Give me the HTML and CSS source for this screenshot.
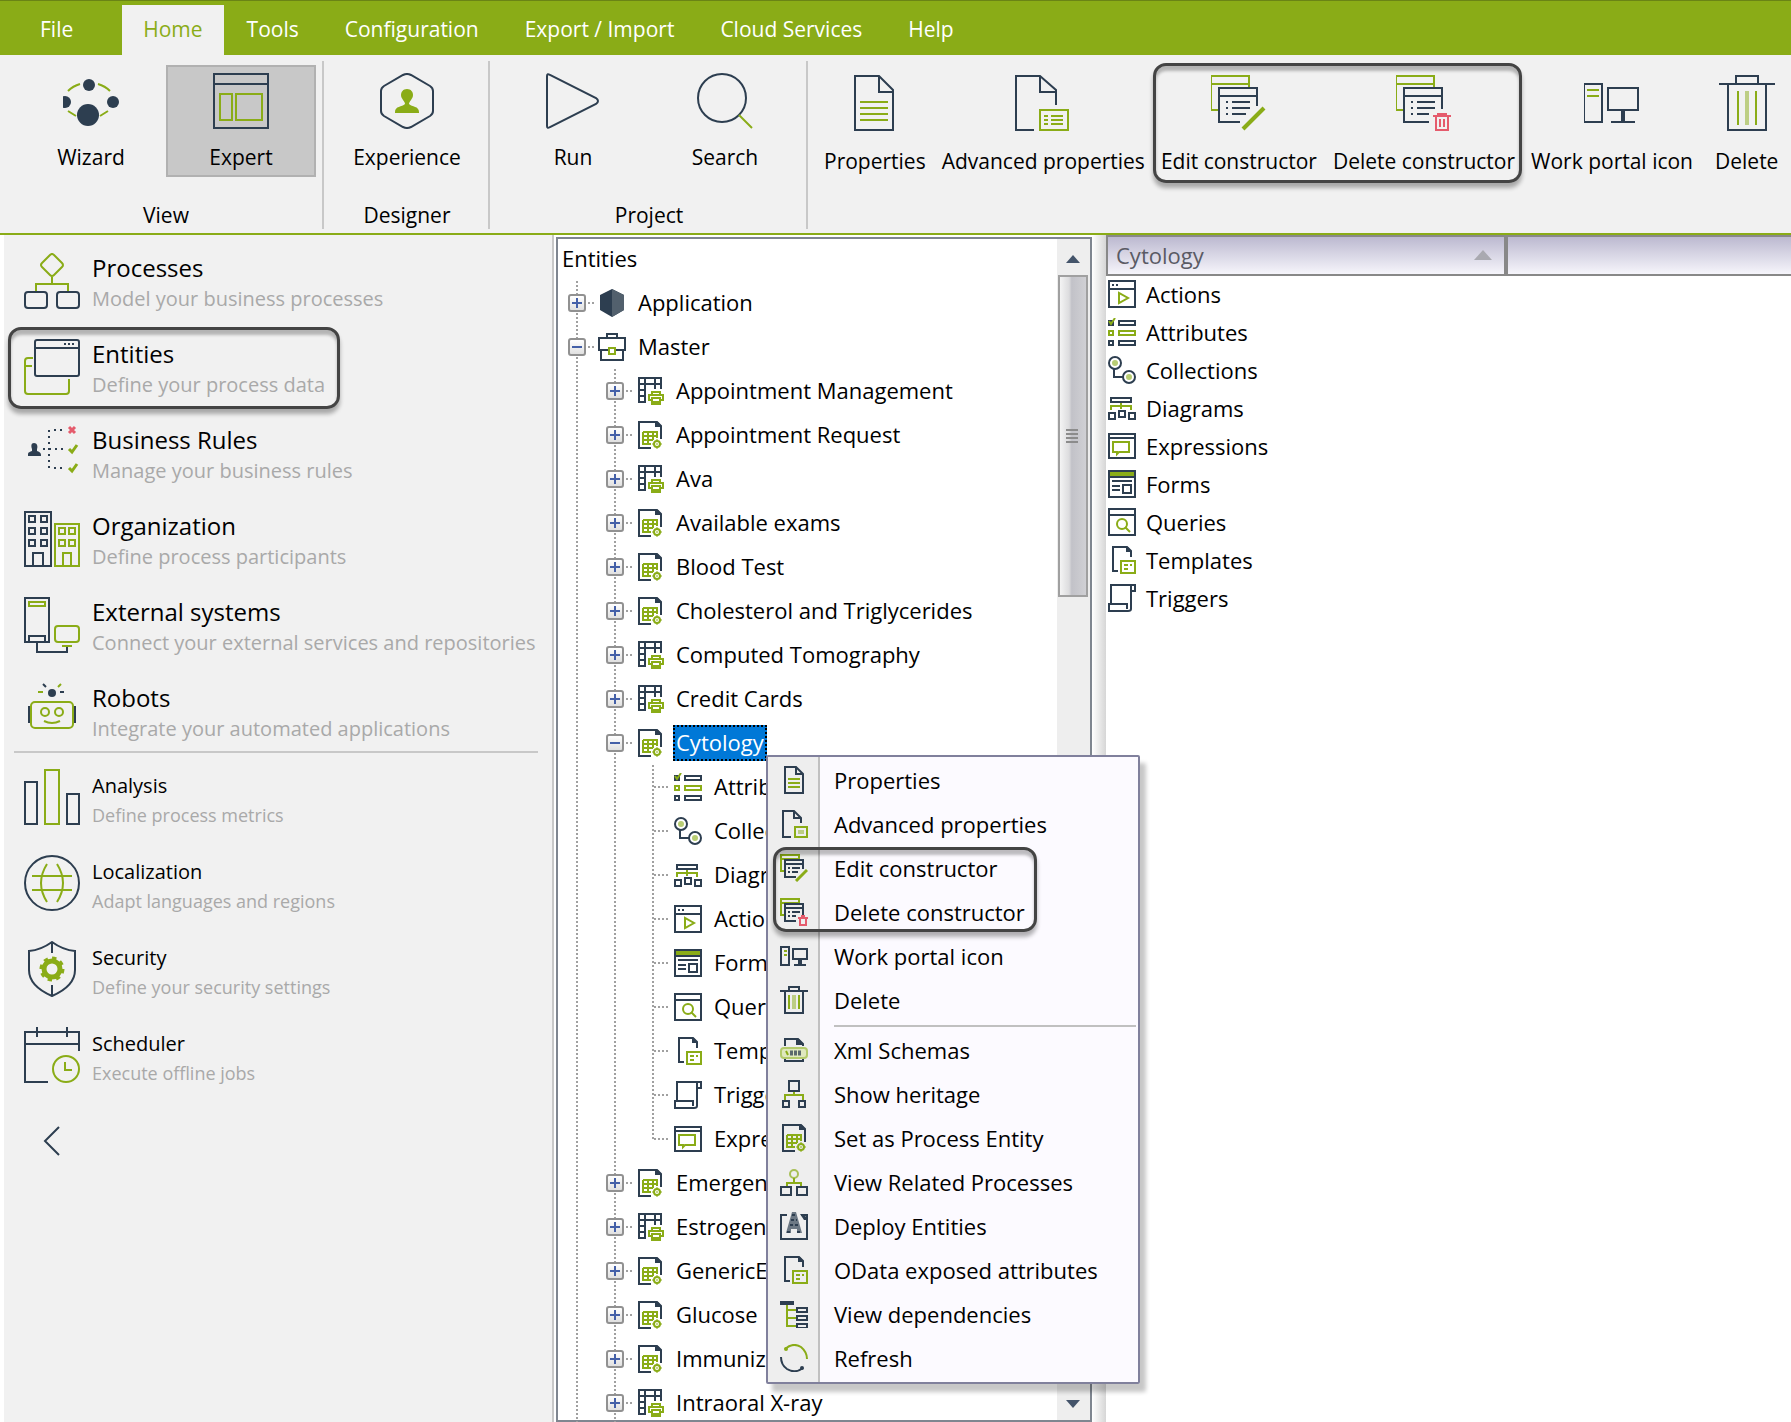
FILE: index.html
```html
<!DOCTYPE html>
<html lang="en">
<head>
    <meta charset="UTF-8">
    <meta name="viewport" content="width=device-width, initial-scale=1.0">
    <title>Studio - Entities</title>
    <link rel="stylesheet" href="styles.css">
</head>
<body>

    <!-- Icon library -->
    <svg class="icon-library" aria-hidden="true">
        <!-- Large icons, 56 x 56 -->
        <symbol id="wizard" viewBox="3 0 56 56">
            <path class="g" d="M8 18Q13 13 20 11M38 11Q45 13 50 18M8 38l8 5M48 38l-8 5"/>
            <g class="nf"><circle cx="29" cy="12" r="6"/><circle cx="5" cy="29" r="6"/><circle cx="53" cy="29" r="6"/><circle cx="28" cy="42" r="11"/></g>
        </symbol>
        <symbol id="expert" viewBox="0 0 56 56">
            <path class="n" d="M1 1H55V55H1ZM1 11H55"/>
            <path class="g" d="M7 21H19V47H7ZM23 21H49V47H23Z"/>
        </symbol>
        <symbol id="experience" viewBox="0 0 56 56">
            <path class="n" d="M24 2Q28 0 32 2L51 13Q54 15 54 18V38Q54 41 51 43L32 54Q28 56 24 54L5 43Q2 41 2 38V18Q2 15 5 13Z"/>
            <path class="gf" d="M28 16c-4 0-6 3-6 6 0 4 4 6 4 9-3 3-10 2-10 8v1h24v-1c0-6-7-5-10-8 0-3 4-5 4-9 0-3-2-6-6-6z"/>
        </symbol>
        <symbol id="run" viewBox="0 0 56 56">
            <path class="n" d="M2 3Q2 0 5 2L51 25Q55 28 51 31L5 54Q2 56 2 53Z"/>
        </symbol>
        <symbol id="search" viewBox="0 0 56 56">
            <circle class="n" cx="25" cy="25" r="24"/>
            <path class="g" d="M42 42L55 55"/>
        </symbol>
        <symbol id="properties" viewBox="1 0 56 56">
            <path class="n" d="M9 1H33L47 15V55H9ZM33 1V17H47"/>
            <path class="g" d="M14 27H42M14 33H42M14 39H42M14 45H42"/>
        </symbol>
        <symbol id="advanced" viewBox="2 0 56 56">
            <path class="n" d="M21 55H3V1H27L43 15V30M27 1V17H43"/>
            <path class="g" d="M27 35H55V55H27ZM31 41H35M38 41H50M31 45H35M38 45H50M31 49H35M38 49H50"/>
        </symbol>
        <symbol id="edit-ctor" viewBox="1 0 56 56">
            <path class="g" d="M8 35H1V1H39V12M1 9H39"/>
            <path class="n" d="M47 31V13H9V47H30M9 21H47M16 27H18M22 27H40M16 33H18M22 33H40M16 39H18M22 39H36"/>
            <path class="g" stroke-width="4" d="M33 54L54 33"/>
        </symbol>
        <symbol id="delete-ctor" viewBox="1 0 56 56">
            <path class="g" d="M8 35H1V1H39V12M1 9H39"/>
            <path class="n" d="M47 34V13H9V47H34M9 21H47M16 27H18M22 27H40M16 33H18M22 33H40M16 39H18M22 39H34"/>
            <path class="r" d="M38 41H56M42 39H52M41 41V55H53V41M45 44V52M49 44V52"/>
        </symbol>
        <symbol id="portal" viewBox="1 0 56 56">
            <path class="n" d="M1 9H19V47H1ZM25 13H55V35H25ZM28 47H52"/>
            <path class="n" stroke-width="4" d="M40 35V47"/>
            <path class="g" d="M4 15H16M4 21H16"/>
        </symbol>
        <symbol id="bin" viewBox="0 0 56 56">
            <path class="n" d="M0 9H56M17 9V1H39V9M9 9V55H47V9"/>
            <path class="g" d="M19 16V50M37 16V50"/>
            <path class="g" stroke-width="4" opacity=".5" d="M28 16V50"/>
        </symbol>
        <symbol id="processes" viewBox="0 0 56 56">
            <path class="g" d="M26 2Q28 0 30 2L38 10Q40 12 38 14L30 22Q28 24 26 22L18 14Q16 12 18 10ZM28 24V31M12 38V31H44V38"/>
            <rect class="n" x="1" y="39" width="22" height="16" rx="3"/>
            <rect class="n" x="33" y="39" width="22" height="16" rx="3"/>
        </symbol>
        <symbol id="entities" viewBox="0 0 56 56">
            <path class="g" d="M9 19H4Q1 19 1 22V52Q1 55 4 55H42Q45 55 45 52V40M1 27H8"/>
            <rect class="n" x="11" y="1" width="44" height="36" rx="2"/>
            <path class="n" d="M11 9H55M40 5H42M44 5H46M48 5H50"/>
        </symbol>
        <symbol id="rules" viewBox="0 0 56 56">
            <path class="nf" d="M10 18c3 0 4 3 3 6v2c3 1 4 2 4 4v1H4v-2c0-2 2-2 4-3v-2c-1-3-1-6 2-6z"/>
            <path class="n" stroke-dasharray="2 4" d="M19 24H40M25 5V44M30 5H40M30 43H40"/>
            <path class="r" stroke-width="3" d="M45 2L51 8M51 2L45 8"/>
            <path class="g" stroke-width="3" d="M45 24L48 27L53 20M45 43L48 46L53 39"/>
        </symbol>
        <symbol id="organization" viewBox="0 0 56 56">
            <path class="n" d="M1 1H27V55H1ZM5 5h6v6h-6zM17 5h6v6h-6zM5 17h6v6h-6zM17 17h6v6h-6zM5 29h6v6h-6zM17 29h6v6h-6zM9 55V42H19V55"/>
            <path class="g" d="M31 13H55V55H31ZM35 17h6v6h-6zM45 17h6v6h-6zM35 29h6v6h-6zM45 29h6v6h-6zM39 55V42H47V55"/>
        </symbol>
        <symbol id="external" viewBox="0 0 56 56">
            <path class="n" d="M1 1H25V45H1ZM5 45V39H21V45M13 45V55H43V50"/>
            <path class="g" d="M5 5H21V9H5ZM38 49H48"/>
            <rect class="g" x="31" y="29" width="24" height="16" rx="3"/>
        </symbol>
        <symbol id="robots" viewBox="0 0 56 56">
            <circle class="nf" cx="28" cy="10" r="4"/>
            <path class="n" d="M19 1L22 4M36 9H40M5 23V40M51 23V40"/>
            <path class="g" d="M37 1L34 4M14 9H19M20 38Q28 42 36 38"/>
            <rect class="g" x="7" y="19" width="42" height="26" rx="4"/>
            <circle class="g" cx="21" cy="29" r="4"/><circle class="g" cx="35" cy="29" r="4"/>
        </symbol>
        <symbol id="analysis" viewBox="0 0 56 56">
            <path class="n" d="M1 13H13V55H1ZM43 25H55V55H43Z"/>
            <path class="g" d="M21 1H35V55H21Z"/>
        </symbol>
        <symbol id="localization" viewBox="0 0 56 56">
            <circle class="n" cx="28" cy="28" r="27"/>
            <path class="g" d="M8 21H48M8 35H48M23 9Q11 28 23 47M33 9Q45 28 33 47"/>
        </symbol>
        <symbol id="security" viewBox="0 0 56 56">
            <path class="n" d="M28 1Q17 9 5 10V29Q5 45 28 55Q51 45 51 29V10Q39 9 28 1ZM28 1V12M28 44V55"/>
            <circle class="g" cx="28" cy="28" r="8" stroke-width="5"/>
            <circle class="g" cx="28" cy="28" r="11" stroke-width="3" stroke-dasharray="4.3 4.3"/>
        </symbol>
        <symbol id="scheduler" viewBox="0 0 56 56">
            <path class="n" d="M24 55H1V5H55V24M1 17H55M13 0V10M43 0V10"/>
            <circle class="g" cx="42" cy="42" r="13"/>
            <path class="g" d="M41 35V43H48"/>
        </symbol>

        <!-- Small icons, 28 x 28 -->
        <symbol id="s-application" viewBox="0 0 28 28">
            <path class="nf" d="M14 0L26 6V21L14 28L2 21V6Z"/>
            <path fill="#52606d" d="M14 0L26 6V21L14 28Z"/>
        </symbol>
        <symbol id="s-master" viewBox="0 0 28 28">
            <path class="n" d="M9 5V1H19V5M10 17H1V5H27V17H18M3 17V27H25V17"/>
            <path class="g" d="M11 15H17V21H11Z"/>
        </symbol>
        <symbol id="s-table" viewBox="-2 0 28 28">
            <path class="n" d="M23 12V1H1V25H7V1M1 7H23M1 13H7M1 19H7M17 1V12M12 1V2"/>
            <path class="g" d="M14 23H11V18H25V23H22M14 17V15H22V17M14 21H22V26H14Z"/>
            <path class="gf" d="M13 24H23V28H13Z"/>
        </symbol>
        <symbol id="s-docgrid" viewBox="-2 0 28 28">
            <path class="n" d="M13 27H1V1H19L23 5V18"/>
            <path class="nf" d="M17 1H20L24 6H17Z"/>
            <path class="g" d="M5 11H19V17M5 11V23H13M5 15H19M5 19H15M10 11V23M15 11V19"/>
            <circle class="g" cx="19" cy="23" r="3"/>
            <path class="g" opacity=".5" stroke-dasharray="2 2" d="M19 18V28M14 23H24"/>
        </symbol>
        <symbol id="s-attributes" viewBox="0 0 28 28">
            <path class="n" d="M11 3H27V7H11ZM11 23H27V27H11ZM1 23H5V27H1ZM1 3H5V7H1Z"/>
            <path class="g" d="M11 13H27V17H11ZM1 13H5V17H1ZM1 3L3 6L7 0"/>
        </symbol>
        <symbol id="s-collections" viewBox="0 0 28 28">
            <path class="n" d="M6 13V21H15"/>
            <circle class="n" cx="7" cy="7" r="6"/><circle class="n" cx="21" cy="21" r="6"/>
            <g class="gf" opacity=".6"><circle cx="7" cy="7" r="3"/><circle cx="21" cy="21" r="3"/></g>
        </symbol>
        <symbol id="s-diagrams" viewBox="0 0 28 28">
            <path class="g" d="M3 16V12H23V16M13 8V15"/>
            <path class="n" d="M3 4H23V8H3ZM1 19H7V25H1ZM11 17H17V23H11ZM21 19H27V25H21Z"/>
        </symbol>
        <symbol id="s-actions" viewBox="0 0 28 28">
            <path class="n" d="M1 1H27V27H1ZM1 9H27M4 5H6M8 5H10"/>
            <path class="g" d="M11 13V23L20 18Z"/>
        </symbol>
        <symbol id="s-forms" viewBox="0 0 28 28">
            <path class="gf" d="M1 1H27V7H1Z"/>
            <path class="n" d="M1 1H27V27H1ZM1 7H27M4 11H24M4 16H12M4 20H12M15 15H23V23H15Z"/>
        </symbol>
        <symbol id="s-queries" viewBox="0 0 28 28">
            <path class="n" d="M1 1H27V27H1ZM1 7H27"/>
            <circle class="g" cx="14" cy="16" r="5"/>
            <path class="g" d="M17 19L22 24"/>
        </symbol>
        <symbol id="s-templates" viewBox="0 0 28 28">
            <path class="n" d="M10 25H5V1H19L23 5V11"/>
            <path class="nf" d="M18 1H20L24 6H18Z"/>
            <path class="g" d="M13 15H27V27H13ZM16 19H20M22 19H24M16 23H20"/>
        </symbol>
        <symbol id="s-triggers" viewBox="0 0 28 28">
            <path class="n" d="M3 19V1H27V7H23V25Q23 27 20 27H1V20H19V25M23 7V1"/>
        </symbol>
        <symbol id="s-expressions" viewBox="0 0 28 28">
            <path class="n" d="M1 2H27V26H1ZM1 6H27"/>
            <path class="g" d="M5 10H21V20H11L9 22V20H5Z"/>
        </symbol>
        <symbol id="s-properties" viewBox="0 0 28 28">
            <path class="n" d="M5 1H16L23 8V27H5ZM16 1V8H23"/>
            <path class="g" d="M8 13H20M8 17H20M8 21H20"/>
        </symbol>
        <symbol id="s-advanced" viewBox="0 0 28 28">
            <path class="n" d="M11 27H3V1H14L21 8V13M14 1V8H21"/>
            <path class="g" d="M15 17H27V27H15Z"/>
            <path class="gf" opacity=".5" d="M18 20H24V24H18Z"/>
        </symbol>
        <symbol id="s-edit-ctor" viewBox="0 0 28 28">
            <path class="g" d="M4 17H1V1H19V5M1 5H19"/>
            <path class="n" d="M23 15V6H5V23H16M5 10H23M8 14H10M12 14H20M8 18H10M12 18H18"/>
            <path class="g" stroke-width="3" d="M16 27L27 16"/>
        </symbol>
        <symbol id="s-delete-ctor" viewBox="0 0 28 28">
            <path class="g" d="M4 17H1V1H19V5M1 5H19"/>
            <path class="n" d="M23 17V6H5V23H16M5 10H23M8 14H10M12 14H20M8 18H10M12 18H16"/>
            <path class="r" d="M18 20H28M21 18H25M20 20V27H26V20"/>
        </symbol>
        <symbol id="s-portal" viewBox="0 0 28 28">
            <path class="n" d="M1 5H9V23H1ZM13 7H27V17H13ZM14 23H26"/>
            <path class="n" stroke-width="4" d="M20 17V23"/>
            <path class="g" d="M4 9H7M4 13H7"/>
        </symbol>
        <symbol id="s-bin" viewBox="0 0 28 28">
            <path class="n" d="M0 5H28M9 5V1H19V5M5 5V27H23V5"/>
            <path class="g" d="M9 9V23M19 9V23"/>
            <path class="g" stroke-width="4" opacity=".5" d="M14 9V23"/>
        </symbol>
        <symbol id="s-xml" viewBox="0 0 28 28">
            <path class="n" d="M5 10V3H18L23 8V10M5 23V25H23V23"/>
            <path class="nf" d="M16 3H19L24 9H16Z"/>
            <rect x="1" y="12" width="26" height="10" rx="3" fill="#dfe8be" stroke="#b3ca6b" stroke-width="2"/>
            <path class="n" opacity=".75" stroke-width="5" stroke-dasharray="3 1" d="M10 17H21"/>
            <path class="g" d="M6 15L8 19"/>
        </symbol>
        <symbol id="s-heritage" viewBox="0 0 28 28">
            <path class="g" d="M14 11V15M5 20V15H23V20"/>
            <path class="n" d="M9 1H19V11H9ZM3 21H9V27H3ZM19 21H25V27H19Z"/>
        </symbol>
        <symbol id="s-related" viewBox="0 0 28 28">
            <circle class="g" cx="14" cy="6" r="4" opacity=".7"/>
            <path class="g" d="M14 10V15M7 18V15H21V18"/>
            <path class="n" d="M1 19H11V27H1ZM17 19H27V27H17Z"/>
        </symbol>
        <symbol id="s-deploy" viewBox="0 0 28 28">
            <path class="n" d="M7 3H1V27H27V3H21"/>
            <path class="nf" d="M20 2H24L28 8H24Z"/>
            <path fill="#6c7884" d="M12 0H16L22 21H17V17H11V21H6Z"/>
            <path class="n" stroke-dasharray="3 2" d="M12 3H16M11 8H17M10 13H19M7 20H11M17 20H21"/>
        </symbol>
        <symbol id="s-dependencies" viewBox="0 0 28 28">
            <path class="nf" d="M0 1H14V5H0Z"/>
            <path class="g" d="M7 5V26H16M7 10H16M7 18H16"/>
            <path class="n" d="M17 8H27V12H17ZM17 16H27V20H17ZM17 24H27V28H17Z"/>
        </symbol>
        <symbol id="s-refresh" viewBox="0 0 28 28">
            <path class="g" d="M5 5Q13 -2 21 3Q27 8 27 15"/>
            <path class="n" d="M1 13Q1 21 7 25Q15 30 23 24"/>
            <circle class="gf" cx="6" cy="5" r="2"/><circle class="nf" cx="22" cy="24" r="2"/>
        </symbol>
    </svg>

    <!-- Menu bar -->
    <nav class="menubar">
        <button class="tab tab-file">File</button>
        <button class="tab active">Home</button>
        <button class="tab">Tools</button>
        <button class="tab">Configuration</button>
        <button class="tab">Export / Import</button>
        <button class="tab">Cloud Services</button>
        <button class="tab">Help</button>
    </nav>

    <!-- Ribbon -->
    <div class="ribbon">
        <section class="group group-view">
            <div class="tools">
                <button class="tool"><svg><use href="#wizard"/></svg>Wizard</button>
                <button class="tool pressed"><svg><use href="#expert"/></svg>Expert</button>
            </div>
            <h2>View</h2>
        </section>
        <section class="group">
            <div class="tools">
                <button class="tool"><svg><use href="#experience"/></svg>Experience</button>
            </div>
            <h2>Designer</h2>
        </section>
        <section class="group">
            <div class="tools">
                <button class="tool"><svg><use href="#run"/></svg>Run</button>
                <button class="tool"><svg><use href="#search"/></svg>Search</button>
            </div>
            <h2>Project</h2>
        </section>
        <section class="group group-edit">
            <button class="tool"><svg><use href="#properties"/></svg>Properties</button>
            <button class="tool"><svg><use href="#advanced"/></svg>Advanced properties</button>
            <div class="marked marked-tools">
                <button class="tool"><svg><use href="#edit-ctor"/></svg>Edit constructor</button>
                <button class="tool"><svg><use href="#delete-ctor"/></svg>Delete constructor</button>
            </div>
            <button class="tool"><svg><use href="#portal"/></svg>Work portal icon</button>
            <button class="tool tool-delete"><svg><use href="#bin"/></svg>Delete</button>
        </section>
    </div>

    <main class="workspace">
        <!-- Modules -->
        <aside class="sidebar">
            <ul class="modules">
                <li><a href="#"><svg><use href="#processes"/></svg><span><b>Processes</b><small>Model your business processes</small></span></a></li>
                <li><a href="#" class="marked marked-module"><svg><use href="#entities"/></svg><span><b>Entities</b><small>Define your process data</small></span></a></li>
                <li><a href="#"><svg><use href="#rules"/></svg><span><b>Business Rules</b><small>Manage your business rules</small></span></a></li>
                <li><a href="#"><svg><use href="#organization"/></svg><span><b>Organization</b><small>Define process participants</small></span></a></li>
                <li><a href="#"><svg><use href="#external"/></svg><span><b>External systems</b><small>Connect your external services and repositories</small></span></a></li>
                <li><a href="#"><svg><use href="#robots"/></svg><span><b>Robots</b><small>Integrate your automated applications</small></span></a></li>
            </ul>
            <ul class="modules modules-small">
                <li><a href="#"><svg><use href="#analysis"/></svg><span><b>Analysis</b><small>Define process metrics</small></span></a></li>
                <li><a href="#"><svg><use href="#localization"/></svg><span><b>Localization</b><small>Adapt languages and regions</small></span></a></li>
                <li><a href="#"><svg><use href="#security"/></svg><span><b>Security</b><small>Define your security settings</small></span></a></li>
                <li><a href="#"><svg><use href="#scheduler"/></svg><span><b>Scheduler</b><small>Execute offline jobs</small></span></a></li>
            </ul>
            <button class="collapse" aria-label="Collapse">
                <svg viewBox="0 0 18 30"><path class="n" d="M16 1L2 15L16 29"/></svg>
            </button>
        </aside>

        <!-- Entities tree -->
        <section class="tree-panel">
            <div class="tree">
                <div class="tree-title">Entities</div>
                <ul>
                    <li><div class="row"><button class="expander" aria-label="Expand"></button><svg><use href="#s-application"/></svg><span>Application</span></div></li>
                    <li>
                        <div class="row"><button class="expander open" aria-label="Collapse"></button><svg><use href="#s-master"/></svg><span>Master</span></div>
                        <ul>
                            <li><div class="row"><button class="expander" aria-label="Expand"></button><svg><use href="#s-table"/></svg><span>Appointment Management</span></div></li>
                            <li><div class="row"><button class="expander" aria-label="Expand"></button><svg><use href="#s-docgrid"/></svg><span>Appointment Request</span></div></li>
                            <li><div class="row"><button class="expander" aria-label="Expand"></button><svg><use href="#s-table"/></svg><span>Ava</span></div></li>
                            <li><div class="row"><button class="expander" aria-label="Expand"></button><svg><use href="#s-docgrid"/></svg><span>Available exams</span></div></li>
                            <li><div class="row"><button class="expander" aria-label="Expand"></button><svg><use href="#s-docgrid"/></svg><span>Blood Test</span></div></li>
                            <li><div class="row"><button class="expander" aria-label="Expand"></button><svg><use href="#s-docgrid"/></svg><span>Cholesterol and Triglycerides</span></div></li>
                            <li><div class="row"><button class="expander" aria-label="Expand"></button><svg><use href="#s-table"/></svg><span>Computed Tomography</span></div></li>
                            <li><div class="row"><button class="expander" aria-label="Expand"></button><svg><use href="#s-table"/></svg><span>Credit Cards</span></div></li>
                            <li class="has-menu">
                                <div class="row"><button class="expander open" aria-label="Collapse"></button><svg><use href="#s-docgrid"/></svg><span class="selected">Cytology</span></div>
                                <ul class="leaves">
                                    <li><div class="row"><svg><use href="#s-attributes"/></svg><span>Attributes</span></div></li>
                                    <li><div class="row"><svg><use href="#s-collections"/></svg><span>Collections</span></div></li>
                                    <li><div class="row"><svg><use href="#s-diagrams"/></svg><span>Diagrams</span></div></li>
                                    <li><div class="row"><svg><use href="#s-actions"/></svg><span>Actions</span></div></li>
                                    <li><div class="row"><svg><use href="#s-forms"/></svg><span>Forms</span></div></li>
                                    <li><div class="row"><svg><use href="#s-queries"/></svg><span>Queries</span></div></li>
                                    <li><div class="row"><svg><use href="#s-templates"/></svg><span>Templates</span></div></li>
                                    <li><div class="row"><svg><use href="#s-triggers"/></svg><span>Triggers</span></div></li>
                                    <li><div class="row"><svg><use href="#s-expressions"/></svg><span>Expressions</span></div></li>
                                </ul>
                                <!-- Context menu -->
                                <div class="context-menu">
                                    <button><svg><use href="#s-properties"/></svg>Properties</button>
                                    <button><svg><use href="#s-advanced"/></svg>Advanced properties</button>
                                    <div class="marked marked-menu">
                                        <button><svg><use href="#s-edit-ctor"/></svg>Edit constructor</button>
                                        <button><svg><use href="#s-delete-ctor"/></svg>Delete constructor</button>
                                    </div>
                                    <button><svg><use href="#s-portal"/></svg>Work portal icon</button>
                                    <button><svg><use href="#s-bin"/></svg>Delete</button>
                                    <hr>
                                    <button><svg><use href="#s-xml"/></svg>Xml Schemas</button>
                                    <button><svg><use href="#s-heritage"/></svg>Show heritage</button>
                                    <button><svg><use href="#s-docgrid"/></svg>Set as Process Entity</button>
                                    <button><svg><use href="#s-related"/></svg>View Related Processes</button>
                                    <button><svg><use href="#s-deploy"/></svg>Deploy Entities</button>
                                    <button><svg><use href="#s-templates"/></svg>OData exposed attributes</button>
                                    <button><svg><use href="#s-dependencies"/></svg>View dependencies</button>
                                    <button><svg><use href="#s-refresh"/></svg>Refresh</button>
                                </div>
                            </li>
                            <li><div class="row"><button class="expander" aria-label="Expand"></button><svg><use href="#s-docgrid"/></svg><span>Emergen</span></div></li>
                            <li><div class="row"><button class="expander" aria-label="Expand"></button><svg><use href="#s-table"/></svg><span>Estrogen</span></div></li>
                            <li><div class="row"><button class="expander" aria-label="Expand"></button><svg><use href="#s-docgrid"/></svg><span>GenericEx</span></div></li>
                            <li><div class="row"><button class="expander" aria-label="Expand"></button><svg><use href="#s-docgrid"/></svg><span>Glucose</span></div></li>
                            <li><div class="row"><button class="expander" aria-label="Expand"></button><svg><use href="#s-docgrid"/></svg><span>Immuniza</span></div></li>
                            <li><div class="row"><button class="expander" aria-label="Expand"></button><svg><use href="#s-table"/></svg><span>Intraoral X-ray</span></div></li>
                        </ul>
                    </li>
                </ul>
            </div>
            <div class="scrollbar">
                <button class="arrow" aria-label="Scroll up"><svg viewBox="0 0 14 8"><path d="M0 8L7 0L14 8Z"/></svg></button>
                <div class="track"><div class="thumb"></div></div>
                <button class="arrow" aria-label="Scroll down"><svg viewBox="0 0 14 8"><path d="M0 0L7 8L14 0Z"/></svg></button>
            </div>
        </section>

        <div class="splitter"></div>

        <!-- Details of the selected entity -->
        <section class="details">
            <div class="details-header">
                <button class="column">Cytology<svg viewBox="0 0 18 10"><path d="M0 10L9 0L18 10Z"/></svg></button>
                <div class="column-rest"></div>
            </div>
            <ul class="details-list">
                <li><svg><use href="#s-actions"/></svg>Actions</li>
                <li><svg><use href="#s-attributes"/></svg>Attributes</li>
                <li><svg><use href="#s-collections"/></svg>Collections</li>
                <li><svg><use href="#s-diagrams"/></svg>Diagrams</li>
                <li><svg><use href="#s-expressions"/></svg>Expressions</li>
                <li><svg><use href="#s-forms"/></svg>Forms</li>
                <li><svg><use href="#s-queries"/></svg>Queries</li>
                <li><svg><use href="#s-templates"/></svg>Templates</li>
                <li><svg><use href="#s-triggers"/></svg>Triggers</li>
            </ul>
        </section>
    </main>

</body>
</html>
```

FILE: styles.css
```css
/* Reset and Body Styling */
*,
*::after {
    margin: 0;
    padding: 0;
    box-sizing: border-box;
}
body {
    font-family: 'Open Sans', 'Noto Sans', sans-serif;
    font-size: 22px;
    line-height: 30px;
    color: #000000;
    background-color: #ffffff;
    display: flex;
    flex-direction: column;
    height: 100vh;
    overflow: hidden;
}
button {
    font: inherit;
    color: inherit;
    background: none;
    border: none;
    cursor: pointer;
}
ul {
    list-style: none;
}
a {
    color: inherit;
    text-decoration: none;
}
svg {
    display: block;
    flex: none;
}
symbol {
    overflow: visible;
}

/* Icon colours */
.icon-library {
    position: absolute;
    width: 0;
    height: 0;
}
.n, .g, .r {
    fill: none;
}
.n {
    stroke: #2d3e50; /* Navy */
}
.g {
    stroke: #8aac17; /* Green */
}
.r {
    stroke: #e55b6c; /* Red */
}
.n:not([stroke-width]),
.g:not([stroke-width]),
.r:not([stroke-width]) {
    stroke-width: 2px;
}
.nf {
    fill: #2d3e50;
}
.gf {
    fill: #8aac17;
}

/* Dark frame around the highlighted items */
.marked {
    position: relative;
}
.marked::after {
    content: '';
    position: absolute;
    border: 3px solid #444444;
    border-radius: 13px;
    box-shadow: 0 5px 4px rgba(0, 0, 0, 0.3), inset 0 5px 3px rgba(0, 0, 0, 0.25);
    pointer-events: none;
}

/* Menu bar */
.menubar {
    display: flex;
    flex: none;
    height: 55px;
    padding: 4px 17px 0;
    background-color: #8aac17;
    border-top: 1px solid #6a8415;
    color: #ffffff;
}
.tab {
    padding: 0 23px 2px;
    font-size: 21px;
}
.tab-file {
    margin-right: 26px;
}
.tab.active {
    padding: 0 21px 2px;
    background-color: #f1f1f1;
    color: #8aac17;
}

/* Ribbon */
.ribbon {
    display: flex;
    flex: none;
    height: 180px;
    padding: 6px 0 4px;
    font-size: 21px;
    background-color: #f1f1f1;
    border-bottom: 2px solid #8aac17;
}
.group {
    display: flex;
    flex-direction: column;
    justify-content: space-between;
    padding: 4px 6px 0 8px;
    border-right: 2px solid #c8c8c8;
}
.group-view {
    padding-left: 16px;
}
.group h2 {
    font-size: 21px;
    font-weight: normal;
    line-height: 28px;
    text-align: center;
}
.tools {
    display: flex;
    gap: 2px;
}
.group-view .tools {
    gap: 0;
}
.tool {
    display: flex;
    flex-direction: column;
    align-items: center;
    gap: 13px;
    width: 150px;
    height: 112px;
    padding: 6px 0;
    border: 2px solid transparent;
    white-space: nowrap;
}
.tool svg {
    width: 56px;
    height: 56px;
}
.tool.pressed {
    background-color: #c8c8c8;
    border-color: #b1b1b1;
}
.group-edit {
    flex-direction: row;
    justify-content: flex-start;
    gap: 16px;
    padding-left: 16px;
    border-right: none;
}
.group-edit .tool {
    width: auto;
    gap: 15px;
    padding: 8px 0;
    border: none;
    margin-top: 2px;
}
.group-edit .tool-delete {
    margin-left: 6px;
}
.marked-tools {
    display: flex;
    gap: 16px;
}
.marked-tools::after {
    top: -2px;
    left: -8px;
    right: -7px;
    height: 120px;
}

/* Workspace */
.workspace {
    display: flex;
    flex: 1;
    min-height: 0;
}

/* Sidebar */
.sidebar {
    flex: none;
    width: 554px;
    border-left: 4px solid #ffffff;
    border-right: 2px solid #c8c8c8;
    background-color: #f1f1f1;
    padding: 0 14px 0 10px;
}
.modules li {
    height: 86px;
    padding: 10px 0 0 10px;
}
.modules a {
    display: flex;
    gap: 12px;
    height: 76px;
}
.modules svg {
    width: 56px;
    height: 56px;
    margin-top: 8px;
}
.modules span {
    padding-top: 7px;
    white-space: nowrap;
}
.modules b {
    display: block;
    font-size: 24px;
    font-weight: normal;
    line-height: 32px;
}
.modules small {
    display: block;
    font-size: 20px;
    line-height: 30px;
    color: #a9a9a9;
}
.modules-small {
    border-top: 2px solid #c8c8c8;
}
.modules-small li {
    padding-top: 8px;
}
.modules-small span {
    padding-top: 9px;
}
.modules-small b {
    font-size: 20px;
}
.modules-small small {
    font-size: 18px;
    line-height: 26px;
}
.marked-module::after {
    top: -4px;
    left: -16px;
    width: 332px;
    height: 82px;
}
.collapse {
    margin: 29px 0 0 29px;
}
.collapse svg {
    width: 18px;
    height: 30px;
}

/* Entities tree */
.tree-panel {
    display: flex;
    flex: none;
    width: 536px;
    margin: 2px 0 0 2px;
    border: 2px solid #7f8690;
    background-color: #ffffff;
}
.tree {
    flex: 1;
    min-width: 0;
    padding-left: 4px;
}
.tree-title {
    height: 42px;
    line-height: 38px;
}
.tree ul {
    padding-left: 6px;
    background: repeating-linear-gradient(#a0a0a0 0 2px, transparent 2px 4px) 14px 0 / 2px 100% no-repeat;
}
.tree ul ul {
    margin-left: 32px;
}
.row {
    display: flex;
    align-items: center;
    height: 44px;
    white-space: nowrap;
}
.row span {
    margin-left: 9px;
    padding: 0 3px 2px;
    line-height: 34px;
}
.row .selected {
    color: #ffffff;
    background-color: #0078d7;
    outline: 2px dotted #000000;
    outline-offset: -2px;
}
.expander {
    flex: none;
    width: 18px;
    height: 18px;
    border: 2px solid #919191;
    border-radius: 3px;
    background:
        linear-gradient(#4460a8, #4460a8) center / 10px 2px no-repeat,
        linear-gradient(#4460a8, #4460a8) center / 2px 10px no-repeat,
        linear-gradient(#ffffff, #e0e0e0);
}
.expander.open {
    background:
        linear-gradient(#4460a8, #4460a8) center / 10px 2px no-repeat,
        linear-gradient(#ffffff, #e0e0e0);
}
/* The dotted branch is drawn in the padding left of each icon */
.row svg {
    width: 40px;
    height: 28px;
    padding-left: 12px;
    background: repeating-linear-gradient(90deg, #a0a0a0 0 2px, transparent 2px 4px) 2px 50% / 8px 2px no-repeat;
}
.leaves .row {
    padding-left: 10px;
}
.leaves .row svg {
    width: 48px;
    padding-left: 20px;
    background-position: 0 50%;
    background-size: 16px 2px;
}
.tree .leaves {
    background-size: 2px 374px;
}

/* Scrollbar */
.scrollbar {
    display: flex;
    flex-direction: column;
    width: 33px;
    padding: 0 2px 0 1px;
    background-color: #eeeeee;
}
.arrow {
    display: flex;
    align-items: center;
    justify-content: center;
    height: 36px;
    padding-top: 4px;
}
.arrow svg {
    width: 14px;
    height: 8px;
    fill: #44546a;
}
.track {
    flex: 1;
}
.thumb {
    height: 322px;
    border: 2px solid #a0a0a0;
    background:
        repeating-linear-gradient(#8c8c8c 0 2px, transparent 2px 4px) 6px 50% / 12px 14px no-repeat,
        linear-gradient(90deg, #f4f4f4, #dcdcde 35%, #c2c2c8 45%, #d0d0d4);
}
.splitter {
    flex: none;
    width: 14px;
    background: linear-gradient(90deg, #ffffff, #d6d6d6);
}

/* Context menu */
.has-menu {
    position: relative;
}
.context-menu {
    position: absolute;
    z-index: 2;
    top: 34px;
    left: 160px;
    width: 374px;
    padding: 2px 2px 1px;
    border: 2px solid #80809c;
    border-radius: 2px;
    background: linear-gradient(90deg, #eeeeee 50px, #c0c0c0 50px 52px, #fcfaff 52px);
    box-shadow: 6px 8px 4px rgba(0, 0, 0, 0.22);
}
.context-menu button {
    display: flex;
    align-items: center;
    gap: 26px;
    width: 100%;
    height: 44px;
    padding: 0 0 2px 10px;
    white-space: nowrap;
}
.context-menu svg {
    width: 28px;
    height: 28px;
}
.context-menu hr {
    height: 2px;
    margin: 2px 0 2px 64px;
    border: none;
    background-color: #c0c0c0;
}
.marked-menu::after {
    top: 0;
    left: 3px;
    width: 264px;
    height: 85px;
}

/* Details */
.details {
    flex: 1;
    min-width: 0;
}
.details-header {
    display: flex;
    height: 41px;
    border: 2px solid #888888;
    border-right: none;
    background: linear-gradient(#bcb9d0, #f6f5fb);
}
.column {
    display: flex;
    align-items: center;
    justify-content: space-between;
    width: 400px;
    padding: 0 12px 2px 8px;
    border-right: 4px solid #888888;
    color: #5a5a64;
}
.column svg {
    width: 18px;
    height: 10px;
    fill: #a9a9b0;
}
.details-list li {
    display: flex;
    align-items: center;
    gap: 10px;
    height: 38px;
    padding: 0 0 2px 2px;
}
.details-list svg {
    width: 28px;
    height: 28px;
}
```
